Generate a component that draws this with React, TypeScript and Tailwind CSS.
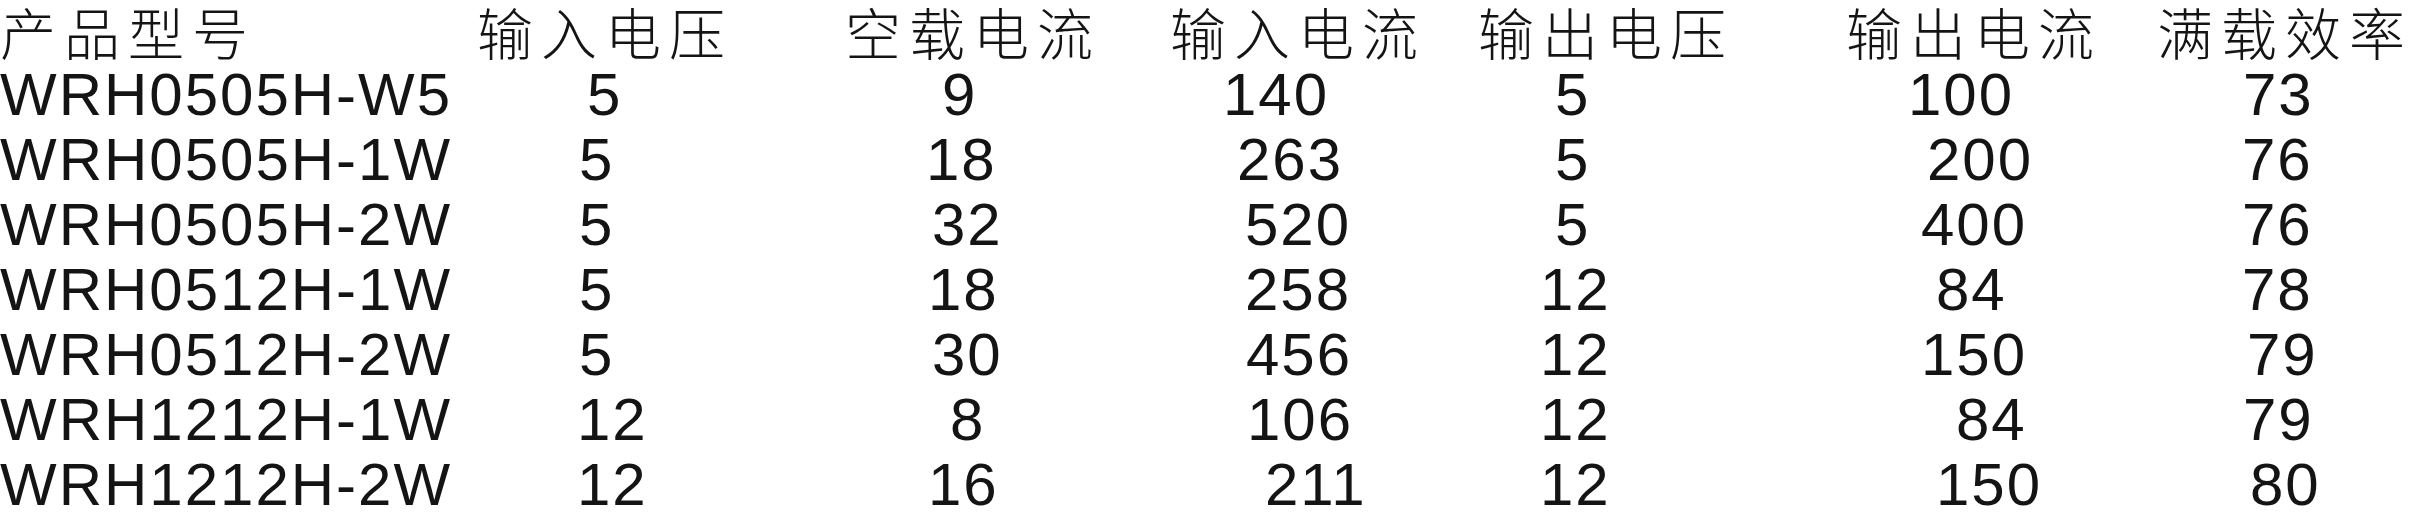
import React from "react";

const headers = ["产品型号", "输入电压", "空载电流", "输入电流", "输出电压", "输出电流", "满载效率"];

type Cell = [string, string];

const rows: Cell[][] = [
  [["WRH0505H-W5", "pl-0"], ["5", "pl-[110px]"], ["9", "pl-[97px]"], ["140", "pl-[53px]"], ["5", "pl-[77px]"], ["100", "pl-[62px]"], ["73", "pl-[86px]"]],
  [["WRH0505H-1W", "pl-0"], ["5", "pl-[102px]"], ["18", "pl-[81px]"], ["263", "pl-[67px]"], ["5", "pl-[77px]"], ["200", "pl-[81px]"], ["76", "pl-[85px]"]],
  [["WRH0505H-2W", "pl-0"], ["5", "pl-[102px]"], ["32", "pl-[87px]"], ["520", "pl-[75px]"], ["5", "pl-[77px]"], ["400", "pl-[75px]"], ["76", "pl-[85px]"]],
  [["WRH0512H-1W", "pl-0"], ["5", "pl-[102px]"], ["18", "pl-[83px]"], ["258", "pl-[75px]"], ["12", "pl-[62px]"], ["84", "pl-[90px]"], ["78", "pl-[85px]"]],
  [["WRH0512H-2W", "pl-0"], ["5", "pl-[102px]"], ["30", "pl-[87px]"], ["456", "pl-[76px]"], ["12", "pl-[62px]"], ["150", "pl-[75px]"], ["79", "pl-[90px]"]],
  [["WRH1212H-1W", "pl-0"], ["12", "pl-[100px]"], ["8", "pl-[105px]"], ["106", "pl-[77px]"], ["12", "pl-[62px]"], ["84", "pl-[110px]"], ["79", "pl-[86px]"]],
  [["WRH1212H-2W", "pl-0"], ["12", "pl-[100px]"], ["16", "pl-[83px]"], ["211", "pl-[95px]"], ["12", "pl-[62px]"], ["150", "pl-[90px]"], ["80", "pl-[93px]"]],
];

const grid = "grid grid-cols-[477px_368px_325px_308px_368px_311px_1fr]";

export default function App() {
  return (
    <div className="w-[2422px] h-[529px] bg-white overflow-hidden text-[#141414]">
      <div className={`${grid} h-[62px] leading-[62px] text-[56px] font-light tracking-[8px] whitespace-nowrap [font-family:'Noto_Sans_CJK_SC',sans-serif]`}>
        {headers.map((h) => (
          <div key={h}>{h}</div>
        ))}
      </div>
      {rows.map((r, i) => (
        <div
          key={i}
          className={`${grid} h-[65px] leading-[65px] text-[60px] tracking-[2px] whitespace-nowrap [font-family:'Liberation_Sans',Arial,sans-serif]`}
        >
          {r.map(([t, pl], j) => (
            <div key={j} className={pl}>
              {t}
            </div>
          ))}
        </div>
      ))}
    </div>
  );
}
